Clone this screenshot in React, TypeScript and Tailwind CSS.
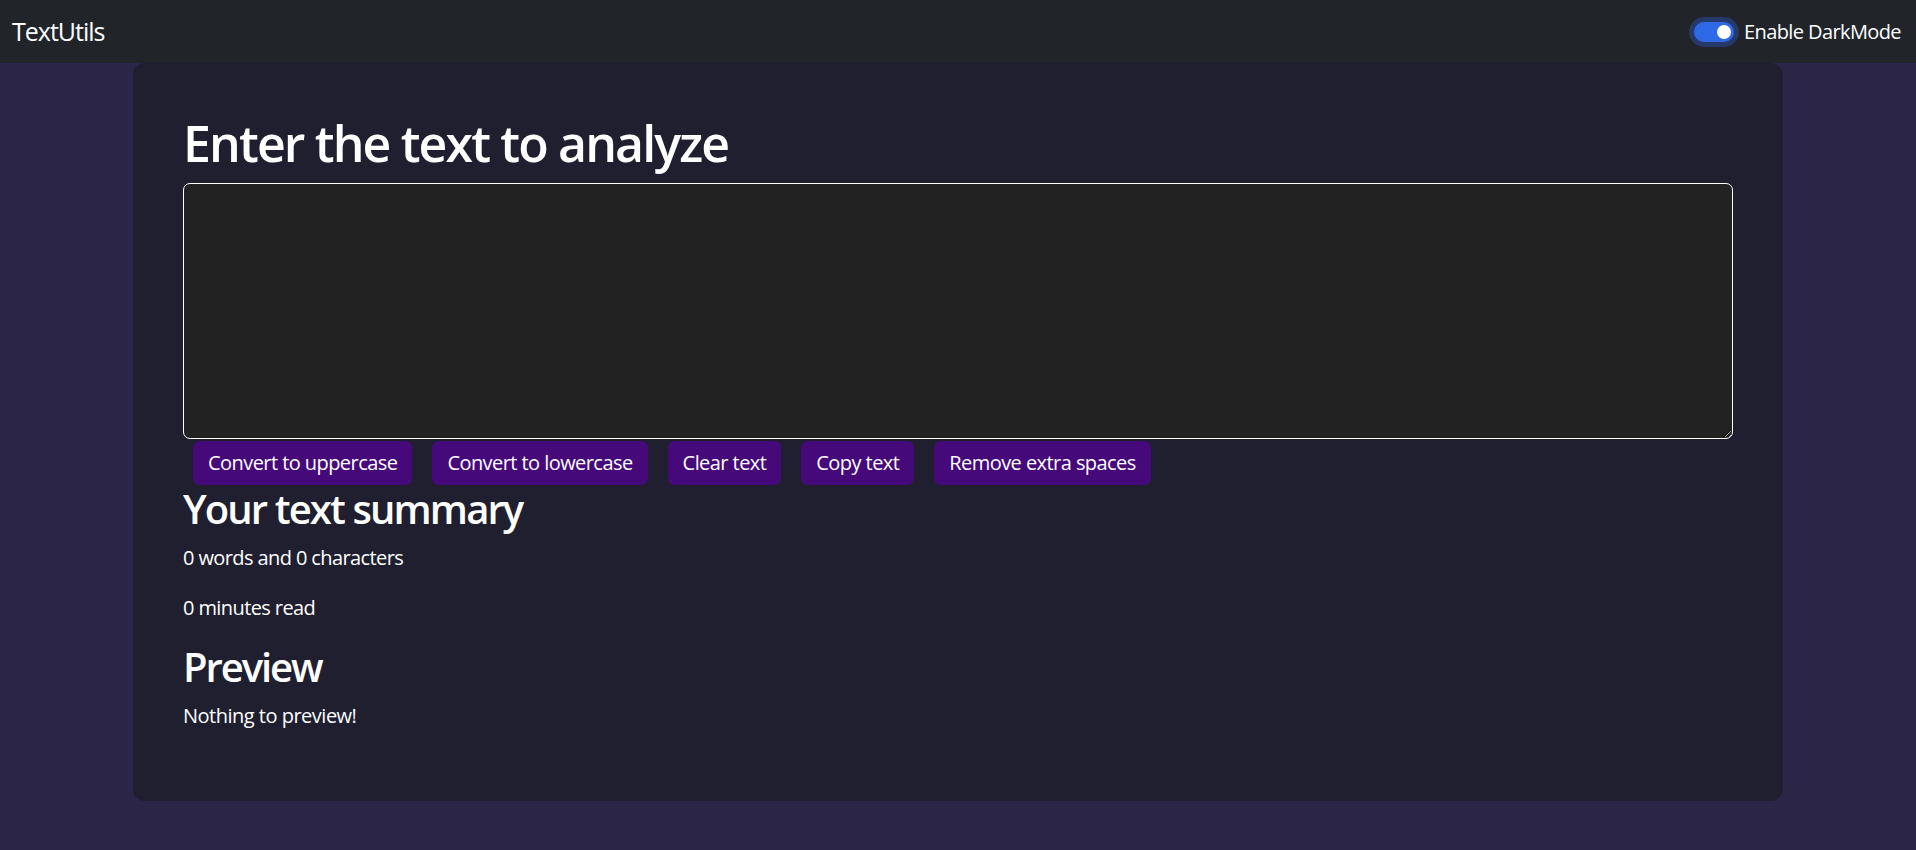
import React, { useState } from 'react';

const App = () => {
  const [text, setText] = useState('');
  const [dark, setDark] = useState(true);

  const words = text.split(/\s+/).filter((w) => w.length > 0).length;
  const actions = [
    'Convert to uppercase',
    'Convert to lowercase',
    'Clear text',
    'Copy text',
    'Remove extra spaces',
  ];

  return (
    <div className="min-h-screen bg-[#2b2647] text-white font-['Open_Sans',sans-serif]">
      <nav className="h-[63px] bg-[#212529] flex items-center justify-between pl-3 pr-[15px]">
        <span className="text-[25px] leading-[37px] text-white tracking-[-0.04em]">TextUtils</span>
        <label className="flex items-center gap-[10px] text-[20px] leading-[30px] tracking-[-0.03em]">
          <button
            onClick={() => setDark(!dark)}
            className="w-[40px] h-[20px] rounded-full bg-[#2f69e8] ring-[5px] ring-[#25396a] flex items-center justify-end px-[3px]"
          >
            <span className="w-[14px] h-[14px] rounded-full bg-white" />
          </button>
          Enable DarkMode
        </label>
      </nav>

      <main className="w-[1650px] mx-auto">
        <div className="bg-[#201f30] rounded-xl p-[50px] tracking-[-0.035em]">
          <h1 className="text-[50px] leading-[60px] font-semibold tracking-[-0.037em] mb-[10px]">
            Enter the text to analyze
          </h1>
          <textarea
            value={text}
            onChange={(e) => setText(e.target.value)}
            rows={8}
            className="block w-full h-[256px] bg-[#222222] border border-white rounded-[7px] px-[15px] py-[7px] text-[20px] text-white outline-none"
          />
          <div className="flex mt-[2px]">
            {actions.map((a) => (
              <button
                key={a}
                className="mx-[10px] px-[15px] py-[7px] text-[20px] leading-[30px] rounded-[7px] bg-[#46097a] text-white"
              >
                {a}
              </button>
            ))}
          </div>
          <h2 className="text-[40px] leading-[48px] font-semibold tracking-[-0.047em] mb-[10px]">Your text summary</h2>
          <p className="text-[20px] leading-[30px] mb-[20px] tracking-[-0.03em]">
            {words} words and {text.length} characters
          </p>
          <p className="text-[20px] leading-[30px] mb-[20px] tracking-[-0.03em]">{0.008 * words} minutes read</p>
          <h2 className="text-[40px] leading-[48px] font-semibold tracking-[-0.052em] mb-[10px]">Preview</h2>
          <p className="text-[20px] leading-[30px] mb-[20px] tracking-[-0.025em]">
            {text.length > 0 ? text : 'Nothing to preview!'}
          </p>
        </div>
      </main>
    </div>
  );
};

export default App;
